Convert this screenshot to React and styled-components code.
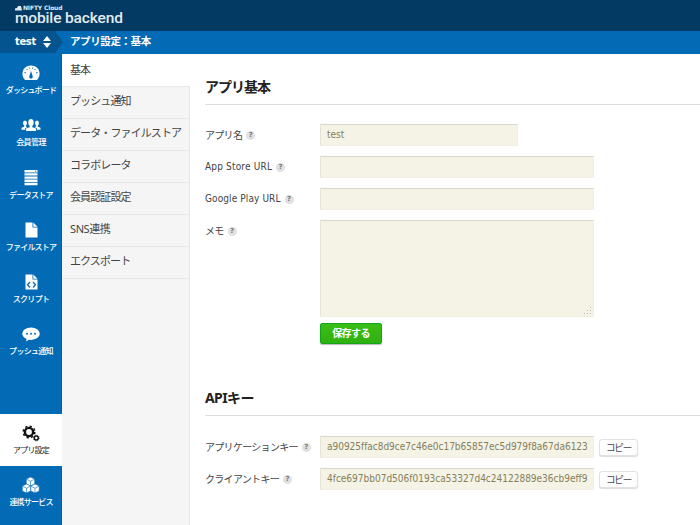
import React from "react";
import styled, { createGlobalStyle } from "styled-components";

const Global = createGlobalStyle`
  * { box-sizing: border-box; }
  body { margin: 0; background: #fff; color: #444; overflow: hidden;
    font-family: "Noto Sans", "Noto Sans CJK JP", sans-serif; font-size: 11px; }
`;

const Page = styled.div`
  width: 700px; height: 525px; overflow: hidden; display: flex; flex-direction: column;
`;
const Header = styled.header`
  height: 31px; flex: none; background: #033a63; padding: 5px 0 0 15px; color: #e2eaf0;
`;
const Brand = styled.div`
  display: flex; align-items: center; gap: 1px; height: 6px;
  font: bold 6px/6px "DejaVu Sans", sans-serif; letter-spacing: -0.15px; white-space: nowrap;
`;
const Product = styled.div`
  font: 500 15.5px/14px Roboto, sans-serif; letter-spacing: -0.15px; height: 14px; white-space: nowrap;
`;
const Crumbs = styled.div`
  height: 23px; flex: none; display: flex; background: #036bb5; color: #fff;
`;
const AppName = styled.div`
  width: 63px; height: 22px; padding: 0 0 1px 15px; display: flex; align-items: center;
  background: #04548f; clip-path: polygon(0 0, 55px 0, 63px 50%, 55px 100%, 0 100%);
  font: bold 11px/20px "DejaVu Sans Condensed", "DejaVu Sans", sans-serif; letter-spacing: -0.3px;
  svg { flex: none; margin-left: auto; margin-right: 12px; }
`;
const Crumb = styled.div`
  padding-left: 7px; font-weight: bold; font-size: 10.5px; line-height: 20px; letter-spacing: -0.4px;
`;
const Body = styled.div`
  flex: 1; min-height: 0; display: flex;
`;
const Nav = styled.nav`
  width: 62px; flex: none; background: #036bb5; border-right: 1px solid #075da4;
`;
const NavItem = styled.div`
  height: 52.3px; margin-top: ${(p) => p.$gap || 0}px; padding-top: 9px; margin-right: -1px;
  display: flex; flex-direction: column; align-items: center;
  color: ${(p) => (p.$active ? "#222" : "#fff")};
  background: ${(p) => (p.$active ? "#fff" : "transparent")};
  svg { display: block; height: 20px; flex: none; }
`;
const NavLabel = styled.span`
  font-size: 8px; line-height: 12px; font-weight: ${(p) => (p.$light ? 400 : 500)}; margin-top: 1px;
  white-space: nowrap; letter-spacing: ${(p) => p.$ls ?? -0.8}px;
`;
const Menu = styled.div`
  width: 128px; flex: none; background: #f5f5f5; border-right: 1px solid #e6e6e6;
`;
const MenuItem = styled.div`
  height: ${(p) => (p.$active ? 33 : 32)}px; width: 128px; padding-left: 8px;
  line-height: ${(p) => (p.$active ? 31 : 28)}px; font-size: 11px; white-space: nowrap;
  letter-spacing: ${(p) => p.$ls ?? -0.9}px; color: #444; border-bottom: 1px solid #e8e8e8;
  background: ${(p) => (p.$active ? "#fff" : "transparent")};
`;
const Main = styled.main`
  flex: 1; min-width: 0; padding: 21px 0 0 15px;
`;
const Heading = styled.h2`
  margin: ${(p) => p.$top || 0}px 0 ${(p) => p.$bottom || 19}px; height: 30px; line-height: 23px;
  border-bottom: 1px solid #dcdcdc;
  font-size: 14px; font-weight: bold; color: #222; letter-spacing: ${(p) => p.$ls}px;
`;
const Row = styled.div`
  display: flex; height: ${(p) => p.$h || 22}px; margin-bottom: 10px;
`;
const Label = styled.div`
  width: 115px; flex: none; display: flex; align-items: center; gap: 4px; height: 20px; white-space: nowrap;
`;
const LabelText = styled.span`
  font-family: "DejaVu Sans Condensed", "Noto Sans CJK JP", sans-serif;
  font-size: 10px; letter-spacing: ${(p) => p.$ls}px;
`;
const Help = styled.span`
  width: 9px; height: 9px; border-radius: 50%; background: #e0e0e0; color: #777; margin-top: 2px;
  font: bold 7px/9px "DejaVu Sans", sans-serif; text-align: center;
`;
const Field = styled.div`
  width: ${(p) => p.$w || 274}px; flex: none; height: 100%; background: #f5f3e6; color: #84805c; position: relative;
  border: 1px solid #e5e3d6; border-top-color: #d9d7cb; border-right-color: #f1efdf; border-bottom-color: #f1efdf;
  border-radius: 1px; padding: 0 5px 0 6px; line-height: 19px;
`;
const Value = styled.div`
  overflow: hidden; white-space: nowrap; font-family: "DejaVu Sans Condensed", "DejaVu Sans", sans-serif;
  font-size: 10px; letter-spacing: ${(p) => p.$ls || 0}px;
`;
const Grip = styled.svg`
  position: absolute; right: 1px; bottom: 1px;
`;
const Save = styled.button`
  display: block; margin: -4px 0 0 115px; width: 62px; height: 21px; padding: 0 0 2px; border: 1px solid #12a51a;
  border-radius: 2px; background: linear-gradient(#3abd16, #2fb20f); color: #fff; box-shadow: 0 1px 1px #bbb;
  font: bold 10px/17px "Noto Sans CJK JP", sans-serif; letter-spacing: -0.6px;
`;
const Copy = styled.button`
  margin: 3px 0 0 5px; width: 39px; height: 17px; padding: 0; border: 1px solid #e2e2e2; border-radius: 3px;
  background: #fdfdfd; box-shadow: 0 1px 1px #ddd; color: #444;
  font: 9.5px/13px "Noto Sans CJK JP", sans-serif; letter-spacing: -1.2px;
`;

const Gauge = () => (
  <svg width="18" height="20" viewBox="0 0 18 20" fill="currentColor">
    <path d="M3 17C-2 12 .5 2.500 9 2.500s11 9.500 6 14.500Z" />
    <g stroke="#036bb5" fill="none"><path d="M2.500 9.500l1.500.5M4.500 6l1 1M7.200 4.500l.3 1.200M10.800 4.500l-.3 1.200M13.500 6l-1 1M15.500 9.500l-1.500.5" /></g>
    <path fill="#036bb5" d="M9 8l1.600 5a1.800 1.800 0 1 1-3.200 0Z" />
  </svg>
);
const People = () => (
  <svg width="20" height="20" viewBox="0 0 20 20" fill="currentColor">
    <ellipse cx="10" cy="7.500" rx="2.700" ry="3.500" />
    <path d="M5 16v-2.500l3.700-1.300V10h2.600v2.200l3.700 1.300V16Z" />
    <ellipse cx="4" cy="8" rx="2" ry="2.600" /><ellipse cx="16" cy="8" rx="2" ry="2.600" />
    <path d="M.5 14.800v-2l2.700-1v-2h1.700v1.800l1.600.6-2.300.9v1.700ZM19.500 14.800v-2l-2.700-1v-2h-1.700v1.800l-1.600.6 2.300.9v1.700Z" />
  </svg>
);
const Store = () => (
  <svg width="14" height="20" viewBox="0 0 14 20" fill="currentColor">
    <path d="M.5 2h13v2.400H.5ZM.5 5.200h13v2.400H.5ZM.5 8.400h13v2.400H.5ZM.5 11.600h13V14H.5ZM.5 14.800h13v2.400H.5Z" />
    <circle cx="11.700" cy="3.200" r=".6" fill="#036bb5" />
  </svg>
);
const File = ({ code }) => (
  <svg width="13" height="20" viewBox="0 0 13 20" fill="currentColor">
    <path d="M.5 2.500h7v5h5v10H.5Z" /><path d="M8.300 2.500l4.200 4.200H8.300Z" />
    {code && <path d="M5 10l-2.500 2.800L5 15.500M8 10l2.500 2.800L8 15.500" stroke="#036bb5" strokeWidth="1.300" fill="none" />}
  </svg>
);
const Chat = () => (
  <svg width="18" height="20" viewBox="0 0 18 20" fill="currentColor">
    <ellipse cx="9" cy="9.700" rx="8.800" ry="6.200" /><path d="M5 13l-1 4.500 5-3Z" />
    <g fill="#036bb5"><circle cx="5" cy="9.700" r="1" /><circle cx="9" cy="9.700" r="1" /><circle cx="13" cy="9.700" r="1" /></g>
  </svg>
);
const Gears = () => (
  <svg width="18" height="20" viewBox="0 0 18 20" fill="none" stroke="#111">
    <circle cx="7" cy="9" r="4.100" strokeWidth="2.400" />
    <circle cx="7" cy="9" r="5.800" strokeWidth="1.500" strokeDasharray="2.200 2.355" />
    <circle cx="14.300" cy="15" r="2" strokeWidth="1.400" />
    <circle cx="14.300" cy="15" r="2.900" strokeWidth=".8" strokeDasharray="1.100 1.178" />
  </svg>
);
const Cubes = () => (
  <svg width="18" height="20" viewBox="0 0 18 20" fill="currentColor" stroke="#036bb5" strokeWidth=".6">
    {[[8.500, 2], [4.500, 9], [13, 9]].map(([x, y]) => (
      <g key={x} transform={`translate(${x} ${y})`}>
        <path d="M0 0l4.200 2v5L0 9l-4.200-2V2Z" /><path d="M-4 2.200l4 2M0 4.200l4-2M0 4.200v5" fill="none" />
      </g>
    ))}
  </svg>
);

const nav = [
  ["ダッシュボード", <Gauge />, -0.8], ["会員管理", <People />, -0.6], ["データストア", <Store />, -0.7],
  ["ファイルストア", <File />, -0.8], ["スクリプト", <File code />, -0.7], ["プッシュ通知", <Chat />, -0.7],
];
const menu = [
  ["プッシュ通知"], ["データ・ファイルストア"], ["コラボレータ"], ["会員認証設定"], ["SNS連携", -0.4], ["エクスポート"],
];

const LabelCell = ({ children, ls }) => (
  <Label><LabelText $ls={ls}>{children}</LabelText><Help>?</Help></Label>
);

export default function App() {
  return (
    <Page>
      <Global />
      <Header>
        <Brand>
          <svg width="7" height="6" viewBox="0 0 7 6" fill="currentColor"><path d="M0 5.500V3.500L2 3l1-2h3l1 4.500Z" /></svg>
          NIFTY Cloud
        </Brand>
        <Product>mobile backend</Product>
      </Header>
      <Crumbs>
        <AppName>
          test
          <svg width="8" height="12" viewBox="0 0 8 12" fill="#fff"><path d="M0 5l4-5 4 5ZM0 7h8l-4 5Z" /></svg>
        </AppName>
        <Crumb>アプリ設定：基本</Crumb>
      </Crumbs>
      <Body>
        <Nav>
          {nav.map(([label, icon, ls]) => (
            <NavItem key={label}>{icon}<NavLabel $ls={ls}>{label}</NavLabel></NavItem>
          ))}
          <NavItem $active $gap={46}><Gears /><NavLabel $light>アプリ設定</NavLabel></NavItem>
          <NavItem><Cubes /><NavLabel>連携サービス</NavLabel></NavItem>
        </Nav>
        <Menu>
          <MenuItem $active>基本</MenuItem>
          {menu.map(([m, ls]) => <MenuItem key={m} $ls={ls}>{m}</MenuItem>)}
        </Menu>
        <Main>
          <Heading $ls={-1}>アプリ基本</Heading>
          <Row><LabelCell ls={-0.7}>アプリ名</LabelCell><Field $w={198}><Value>test</Value></Field></Row>
          <Row><LabelCell ls={0.17}>App Store URL</LabelCell><Field /></Row>
          <Row><LabelCell ls={0.1}>Google Play URL</LabelCell><Field /></Row>
          <Row $h={97}>
            <LabelCell ls={-0.7}>メモ</LabelCell>
            <Field>
              <Grip width="8" height="8" viewBox="0 0 8 8" fill="#bbb">
                <path d="M6 0h1v1H6ZM6 3h1v1H6ZM6 6h1v1H6ZM3 3h1v1H3ZM3 6h1v1H3ZM0 6h1v1H0Z" />
              </Grip>
            </Field>
          </Row>
          <Save>保存する</Save>
          <Heading $top={42} $bottom={20} $ls={-0.6}>APIキー</Heading>
          <Row>
            <LabelCell ls={-0.7}>アプリケーションキー</LabelCell>
            <Field><Value $ls={-0.02}>a90925ffac8d9ce7c46e0c17b65857ec5d979f8a67da61237</Value></Field>
            <Copy>コピー</Copy>
          </Row>
          <Row>
            <LabelCell ls={-0.7}>クライアントキー</LabelCell>
            <Field><Value>4fce697bb07d506f0193ca53327d4c24122889e36cb9eff98</Value></Field>
            <Copy>コピー</Copy>
          </Row>
        </Main>
      </Body>
    </Page>
  );
}
